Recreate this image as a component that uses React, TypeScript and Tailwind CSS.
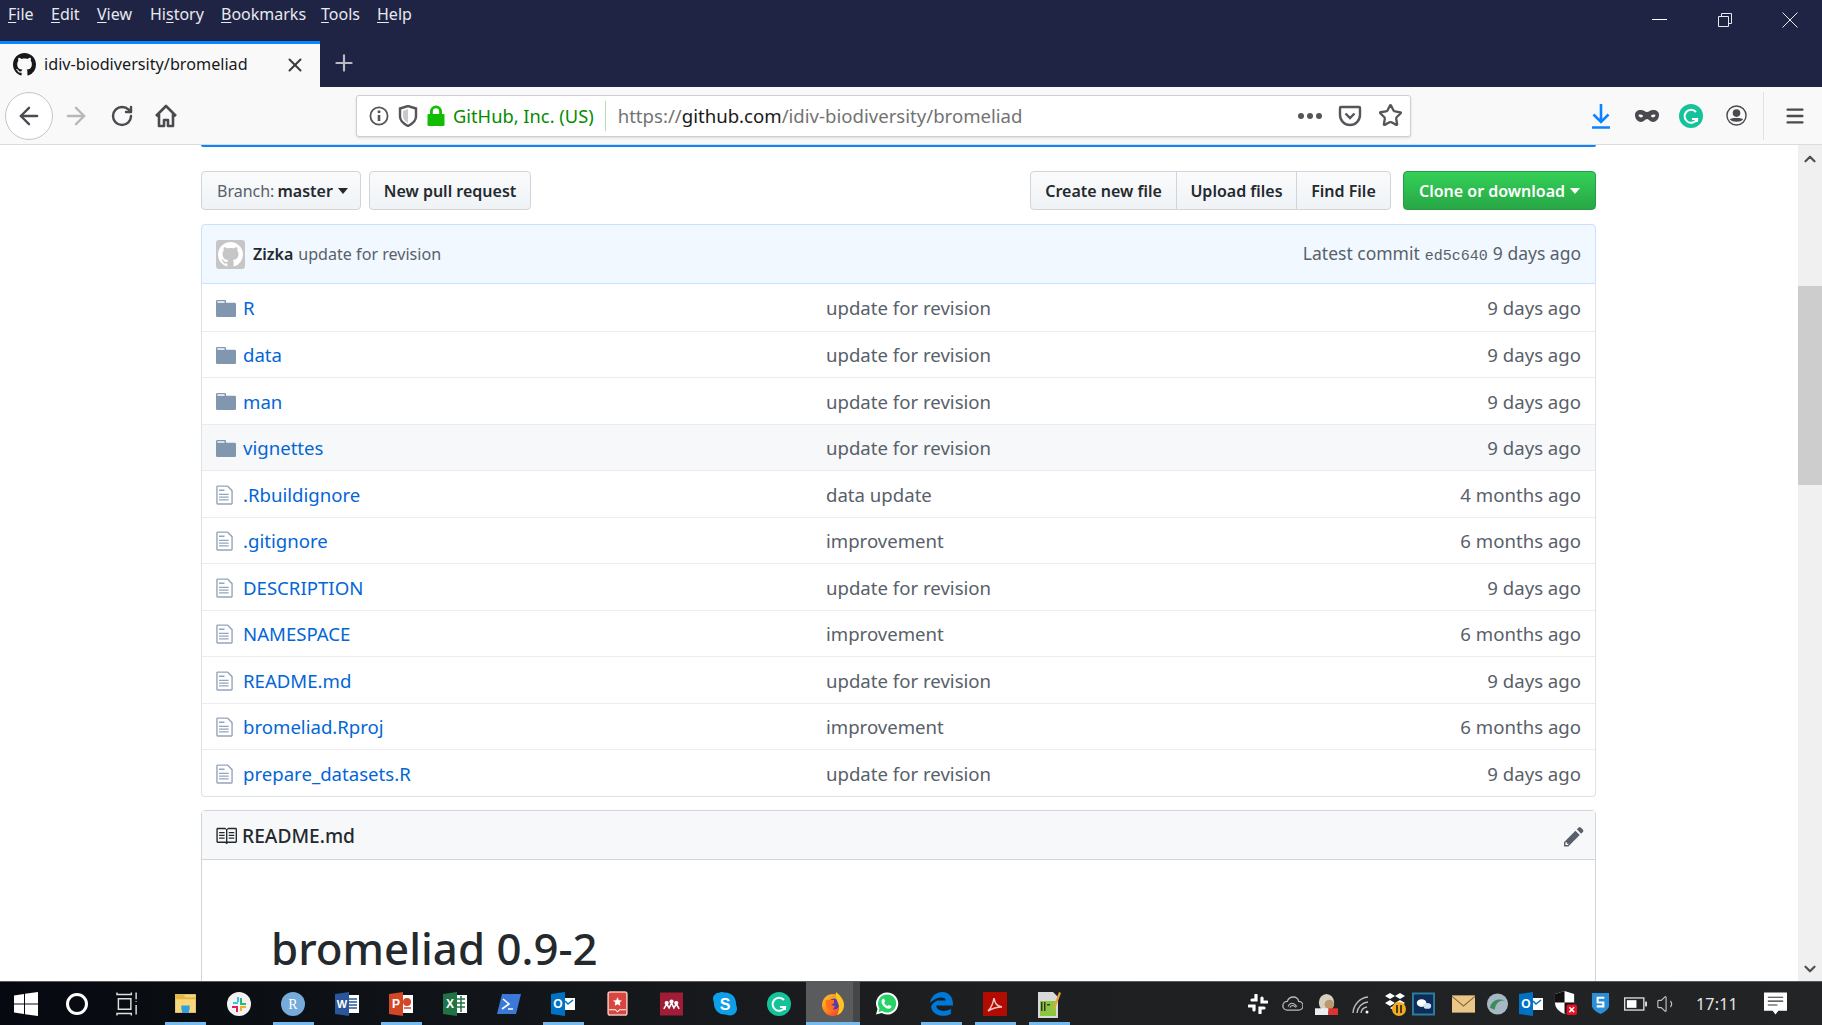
import React from 'react';
import { ArrowLeft, ArrowRight, RotateCw, Star, Plus, X, Menu, ChevronUp, ChevronDown, Volume1 } from 'lucide-react';

const GITHUB = 'M8 0C3.58 0 0 3.58 0 8c0 3.54 2.29 6.53 5.47 7.59.4.07.55-.17.55-.38 0-.19-.01-.82-.01-1.49-2.01.37-2.53-.49-2.69-.94-.09-.23-.48-.94-.82-1.13-.28-.15-.68-.52-.01-.53.63-.01 1.08.58 1.23.82.72 1.21 1.87.87 2.33.66.07-.52.28-.87.51-1.07-1.78-.2-3.64-.89-3.64-3.95 0-.87.31-1.59.82-2.15-.08-.2-.36-1.02.08-2.12 0 0 .67-.21 2.2.82.64-.18 1.32-.27 2-.27.68 0 1.36.09 2 .27 1.53-1.04 2.2-.82 2.2-.82.44 1.1.16 1.92.08 2.12.51.56.82 1.27.82 2.15 0 3.07-1.87 3.75-3.65 3.95.29.25.54.73.54 1.48 0 1.07-.01 1.93-.01 2.2 0 .21.15.46.55.38A8.013 8.013 0 0016 8c0-4.42-3.58-8-8-8z';

const rows = [
  { name: 'R', dir: true, msg: 'update for revision', age: '9 days ago' },
  { name: 'data', dir: true, msg: 'update for revision', age: '9 days ago' },
  { name: 'man', dir: true, msg: 'update for revision', age: '9 days ago' },
  { name: 'vignettes', dir: true, msg: 'update for revision', age: '9 days ago', hover: true },
  { name: '.Rbuildignore', dir: false, msg: 'data update', age: '4 months ago' },
  { name: '.gitignore', dir: false, msg: 'improvement', age: '6 months ago' },
  { name: 'DESCRIPTION', dir: false, msg: 'update for revision', age: '9 days ago' },
  { name: 'NAMESPACE', dir: false, msg: 'improvement', age: '6 months ago' },
  { name: 'README.md', dir: false, msg: 'update for revision', age: '9 days ago' },
  { name: 'bromeliad.Rproj', dir: false, msg: 'improvement', age: '6 months ago' },
  { name: 'prepare_datasets.R', dir: false, msg: 'update for revision', age: '9 days ago' },
];

const menus = [
  { pre: '', u: 'F', post: 'ile', w: 'w-[43px]' },
  { pre: '', u: 'E', post: 'dit', w: 'w-[46px]' },
  { pre: '', u: 'V', post: 'iew', w: 'w-[53px]' },
  { pre: 'Hi', u: 's', post: 'tory', w: 'w-[71px]' },
  { pre: '', u: 'B', post: 'ookmarks', w: 'w-[100px]' },
  { pre: '', u: 'T', post: 'ools', w: 'w-[56px]' },
  { pre: '', u: 'H', post: 'elp', w: 'w-[40px]' },
];

const FolderIcon = () => (
  <svg viewBox="0 0 14 16" className="w-[20px] h-[23px] fill-[#8197b0]">
    <path d="M13 4H7V3c0-.66-.31-1-1-1H1c-.55 0-1 .45-1 1v10c0 .55.45 1 1 1h12c.55 0 1-.45 1-1V5c0-.55-.45-1-1-1zM6 4H1V3h5v1z" />
  </svg>
);

const FileIcon = () => (
  <svg viewBox="0 0 12 16" className="w-[17px] h-[22px] fill-[#93a5bb]">
    <path d="M6 5H2V4h4v1zM2 8h7V7H2v1zm0 2h7V9H2v1zm0 2h7v-1H2v1zm10-7.5V14c0 .55-.45 1-1 1H1c-.55 0-1-.45-1-1V2c0-.55.45-1 1-1h7.5L12 4.5zM11 5L8 2H1v12h10V5z" />
  </svg>
);

const Caret = ({ className }: { className: string }) => (
  <span className={`inline-block w-0 h-0 border-x-[5px] border-x-transparent border-t-[6px] ${className}`} />
);

// taskbar slot, with the little "running" line under it
const Slot = ({ on, active, children }: { on?: boolean; active?: boolean; children: React.ReactNode }) => (
  <div className={`relative w-[54px] h-full flex items-center justify-center ${active ? 'bg-[#5a5b5c]' : ''}`}>
    {children}
    {active && <span className="absolute top-0 right-0 bottom-0 w-[7px] bg-[#454647]" />}
    {on && <span className={`absolute bottom-0 h-[3px] bg-[#76b9ed] ${active ? 'left-0 w-full' : 'left-[7px] w-[41px]'}`} />}
  </div>
);

const OutlookGlyph = () => (
  <svg viewBox="0 0 24 24" className="w-[24px] h-[26px]"><path d="M11 6h13v12H11z" fill="#fff" /><path d="M14 9l3 3 5-4" stroke="#0072c6" strokeWidth="1.500" fill="none" /><path d="M0 2l14-2v24L0 22z" fill="#0072c6" /><text x="7" y="16" textAnchor="middle" fontSize="12" fontWeight="700" fill="#fff" fontFamily="Liberation Sans, sans-serif">O</text></svg>
);

const GrammarlyGlyph = () => (
  <svg viewBox="0 0 24 24" className="w-[24px] h-[24px]"><circle cx="12" cy="12" r="12" fill="#15c39a" /><path d="M17 8a6.500 6.500 0 1 0 1 7h-5" stroke="#fff" strokeWidth="2" fill="none" /><path d="M18 15v3" stroke="#fff" strokeWidth="2" /></svg>
);

const TaskIcons = () => (
  <div className="flex h-full items-center">
    <Slot on>
      <svg viewBox="0 0 24 24" className="w-[25px] h-[25px]"><path d="M2 3h20v18H2z" fill="#f6d87a" /><path d="M2 3h8l2 3h10v2H2z" fill="#e7b64b" /><path d="M8 14h8v3l-1 4H9l-1-4z" fill="#2f9fe0" /></svg>
    </Slot>
    <Slot>
      <svg viewBox="0 0 24 24" className="w-[24px] h-[24px]"><circle cx="12" cy="12" r="12" fill="#f3f3f3" /><rect x="6" y="10" width="5" height="2" fill="#36c5f0" /><rect x="10" y="5" width="2" height="5" fill="#36c5f0" /><rect x="13" y="6" width="2" height="6" fill="#2eb67d" /><rect x="13" y="11" width="6" height="2" fill="#2eb67d" /><rect x="5" y="14" width="6" height="2" fill="#e01e5a" /><rect x="9" y="14" width="2" height="6" fill="#e01e5a" /><rect x="13" y="14" width="2" height="5" fill="#ecb22e" /><rect x="13" y="14" width="6" height="2" fill="#ecb22e" /></svg>
    </Slot>
    <Slot on>
      <svg viewBox="0 0 24 24" className="w-[24px] h-[24px]"><circle cx="12" cy="12" r="12" fill="#75aadb" /><text x="12" y="17" textAnchor="middle" fontSize="14" fill="#fff" fontFamily="Liberation Serif, serif">R</text></svg>
    </Slot>
    <Slot>
      <svg viewBox="0 0 24 24" className="w-[24px] h-[26px]"><path d="M9 3h15v18H9z" fill="#fff" /><path d="M14 7h8M14 10h8M14 13h8M14 16h8" stroke="#2b579a" strokeWidth="1.500" /><path d="M0 2l14-2v24L0 22z" fill="#2b579a" /><text x="7" y="16" textAnchor="middle" fontSize="11" fontWeight="700" fill="#fff" fontFamily="Liberation Sans, sans-serif">W</text></svg>
    </Slot>
    <Slot on>
      <svg viewBox="0 0 24 24" className="w-[24px] h-[26px]"><path d="M9 3h15v18H9z" fill="#fff" /><circle cx="18" cy="10" r="4" fill="#d24726" /><path d="M15 16h7" stroke="#d24726" strokeWidth="1.500" /><path d="M0 2l14-2v24L0 22z" fill="#d24726" /><text x="7" y="16" textAnchor="middle" fontSize="12" fontWeight="700" fill="#fff" fontFamily="Liberation Sans, sans-serif">P</text></svg>
    </Slot>
    <Slot>
      <svg viewBox="0 0 24 24" className="w-[24px] h-[26px]"><path d="M9 3h15v18H9z" fill="#fff" /><path d="M14 7h8M14 11h8M14 15h8M18 4v16" stroke="#217346" strokeWidth="1.500" /><path d="M0 2l14-2v24L0 22z" fill="#217346" /><text x="7" y="16" textAnchor="middle" fontSize="12" fontWeight="700" fill="#fff" fontFamily="Liberation Sans, sans-serif">X</text></svg>
    </Slot>
    <Slot>
      <svg viewBox="0 0 24 20" className="w-[24px] h-[20px]"><path d="M5 0h19l-5 20H0z" fill="#3b78d8" /><path d="M6 5l6 5-7 5M11 15h5" stroke="#fff" strokeWidth="1.600" fill="none" /></svg>
    </Slot>
    <Slot on><OutlookGlyph /></Slot>
    <Slot>
      <svg viewBox="0 0 20 24" className="w-[21px] h-[25px]"><rect x="1" y="1" width="18" height="22" rx="2" fill="#d9463e" stroke="#f3c1bd" strokeWidth="1.500" /><path d="M10 6l1.300 2.800 3 .3-2.200 2 .6 3-2.700-1.500-2.700 1.500.6-3-2.200-2 3-.3z" fill="#fff" /><path d="M2 18h6l2 2 2-2h6" stroke="#fff" fill="none" /></svg>
    </Slot>
    <Slot>
      <svg viewBox="0 0 24 24" className="w-[23px] h-[26px]"><rect width="24" height="24" fill="#a01c37" /><circle cx="7" cy="11" r="2.200" fill="#fff" /><circle cx="12" cy="9.500" r="2.200" fill="#fff" /><circle cx="17" cy="11" r="2.200" fill="#fff" /><path d="M4 17l3-5 2.500 4 2.500-5 2.500 5 2.500-4 3 5" stroke="#fff" strokeWidth="1.600" fill="none" /></svg>
    </Slot>
    <Slot>
      <svg viewBox="0 0 24 24" className="w-[24px] h-[25px]"><path d="M7 1c2-1 3 0 5 0 7 0 11 5 11 11 0 2 1 3 1 5 0 4-3 7-7 7-2 0-3-1-5-1C5 23 1 18 1 12c0-2-1-3-1-5 0-3 3-6 7-6z" fill="#0f9ee8" /><text x="12" y="18" textAnchor="middle" fontSize="16" fontWeight="700" fill="#fff" fontFamily="Liberation Sans, sans-serif">S</text></svg>
    </Slot>
    <Slot><GrammarlyGlyph /></Slot>
    <Slot on active>
      <svg viewBox="0 0 24 24" className="w-[24px] h-[26px]"><defs><linearGradient id="ff" x1="0" y1="0" x2="1" y2="1"><stop offset="0" stopColor="#ffcb2e" /><stop offset="0.55" stopColor="#ff7a1a" /><stop offset="1" stopColor="#e5244a" /></linearGradient></defs><circle cx="12" cy="13" r="11" fill="url(#ff)" /><circle cx="13" cy="12" r="5.500" fill="#5a3bb0" /><path d="M15 0c4 3 8 8 8 13 0 5-3 9-7 10 2-4 3-8 1-12-1-3-3-6-2-11z" fill="#ffc41f" /><path d="M5 8h8v3l-3 2 4 1-3 5c-4-1-7-6-6-11z" fill="#ff6f1e" /></svg>
    </Slot>
    <Slot>
      <svg viewBox="0 0 24 24" className="w-[24px] h-[25px]"><path d="M12 1a11 11 0 0 0-9.500 16.500L1 23l5.700-1.500A11 11 0 1 0 12 1z" fill="#fff" /><path d="M12 3a9 9 0 0 0-7.600 13.800L3.500 20.500l3.700-1A9 9 0 1 0 12 3z" fill="#25d366" /><path d="M8.500 7c1 0 1.500 2.500 1.500 3s-1 1-.8 1.500c.7 1.500 2 2.500 3.300 3 .5 0 1-1 1.500-1 .5 0 2.500 1 2.500 1.500 0 1-1.500 2.500-3 2.200C10 17 6.500 13 6.500 10c0-1.500 1-3 2-3z" fill="#fff" /></svg>
    </Slot>
    <Slot on>
      <svg viewBox="0 0 24 24" className="w-[25px] h-[25px]"><path d="M1 11C2 5 7 1 13 1c6 0 10 5 10 11v2H7c0 5 8 7 14 3v5c-8 4-18 1-19-7 1-3 4-5 6-6h8c0-3-6-5-15 2z" fill="#0078d7" /></svg>
    </Slot>
    <Slot on>
      <svg viewBox="0 0 24 24" className="w-[24px] h-[24px]"><rect width="24" height="24" fill="#b30b00" /><path d="M5 19c2-2 5-7 6-13 1 6 3 8 8 9-5 0-9 1-14 4z" stroke="#f4c7c3" strokeWidth="1.500" fill="none" /></svg>
    </Slot>
    <Slot on>
      <svg viewBox="0 0 24 28" className="w-[24px] h-[28px]"><path d="M1 2h15l5 5v21H1z" fill="#d9d9d9" /><path d="M3 11h16v15H3z" fill="#8cc63f" /><path d="M4 12h1.500v9H4zM7 12h1.500v9H7zM10 14h3v1.500h-3z" fill="#333" /><path d="M16 18l6-16 2 1-6 16-2 1z" fill="#e8a33d" /></svg>
    </Slot>
  </div>
);

const TrayIcons = () => (
  <div className="flex items-center h-full">
    <div className="w-[34px] flex justify-center"><svg viewBox="0 0 20 20" className="w-[20px] h-[20px]"><path d="M8 1v5H4M12 19v-5h4M1 12h5v4M19 8h-5V4" stroke="#fff" strokeWidth="3.200" fill="none" strokeLinecap="round" /></svg></div>
    <div className="w-[34px] flex justify-center"><svg viewBox="0 0 24 18" className="w-[21px] h-[16px]"><path d="M6 16a5 5 0 0 1 0-10c1-3 4-5 7-5s6 2 6 5a5 5 0 0 1 0 10z" stroke="#bbb" strokeWidth="1.500" fill="none" /><path d="M7 12c2-5 6-5 10 0M9 13c2-3 4-3 7 0" stroke="#bbb" strokeWidth="1.200" fill="none" /></svg></div>
    <div className="w-[34px] flex justify-center"><svg viewBox="0 0 24 26" className="w-[23px] h-[25px]"><ellipse cx="12" cy="12" rx="8" ry="9" fill="#d8cfc0" /><circle cx="15" cy="14" r="5" fill="#b99b6b" /><rect y="18" width="14" height="7" fill="#eee" /><rect x="14" y="18" width="10" height="7" fill="#d33" /></svg></div>
    <div className="ml-[1px] w-[34px] flex justify-center"><svg viewBox="0 0 20 20" className="w-[20px] h-[20px]"><path d="M2 19A17 17 0 0 1 17 3M6 19A12 12 0 0 1 17 8M10 19a7 7 0 0 1 6-6" stroke="#bbb" strokeWidth="1.400" fill="none" /><circle cx="16" cy="18" r="1.500" fill="#fff" /></svg></div>
    <div className="w-[34px] flex justify-center"><svg viewBox="0 0 24 24" className="w-[24px] h-[24px]"><path d="M7 1l5 3-5 3-5-3zM17 1l5 3-5 3-5-3zM7 8l5 3-5 3-5-3zM17 8l5 3-5 3-5-3zM7 16l5-3 5 3-5 3z" fill="#fff" /><circle cx="16" cy="17" r="7" fill="#f4a91e" /><path d="M14 13v8M18 13v8" stroke="#222" strokeWidth="1.600" /></svg></div>
    <div className="-ml-[6px] w-[34px] flex justify-center"><svg viewBox="0 0 24 24" className="w-[23px] h-[24px]"><rect x="1" y="1" width="22" height="22" fill="#0d2c5c" stroke="#2a7f9e" strokeWidth="2" /><ellipse cx="10" cy="11" rx="5" ry="4" fill="#fff" /><ellipse cx="16" cy="14" rx="4" ry="3" fill="#cfe2f3" /></svg></div>
    <div className="ml-[6px] w-[34px] flex justify-center"><svg viewBox="0 0 24 18" className="w-[23px] h-[18px]"><rect width="24" height="18" fill="#eac688" /><path d="M0 1l12 10L24 1" stroke="#8a6a35" strokeWidth="1.200" fill="none" /></svg></div>
    <div className="w-[34px] flex justify-center"><svg viewBox="0 0 24 24" className="w-[23px] h-[24px]"><circle cx="12" cy="12" r="11" fill="#a8b7c4" /><path d="M4 16c2-8 8-10 16-8-6 0-10 3-11 10z" fill="#3b8e5a" /></svg></div>
    <div className="w-[34px] flex justify-center"><OutlookGlyph /></div>
    <div className="w-[34px] flex justify-center"><svg viewBox="0 0 24 26" className="w-[23px] h-[25px]"><path d="M11 0l10 3v9c0 6-5 10-10 12C6 22 1 18 1 12V3z" fill="#fff" /><path d="M11 0v12H1V3zM11 12h10c0 6-5 10-10 12z" fill="#111" /><rect x="13" y="14" width="11" height="11" rx="2" fill="#e81123" /><path d="M16 17l5 5M21 17l-5 5" stroke="#fff" strokeWidth="1.500" /></svg></div>
    <div className="ml-[1px] w-[34px] flex justify-center"><svg viewBox="0 0 20 24" className="w-[19px] h-[23px]"><path d="M1 1h18v13c0 4-5 7-9 9-4-2-9-5-9-9z" fill="#2a8fd8" /><path d="M14 6H7v5h6v4H6" stroke="#fff" strokeWidth="2.200" fill="none" /></svg></div>
    <div className="ml-[1px] w-[34px] flex justify-center"><svg viewBox="0 0 24 14" className="w-[23px] h-[14px]"><rect x=".7" y=".7" width="20" height="12.600" stroke="#ddd" strokeWidth="1.400" fill="none" /><rect x="3" y="3" width="10" height="8" fill="#fff" /><rect x="22" y="4.500" width="2" height="5" fill="#ddd" /></svg></div>
    <div className="-ml-[2px] w-[34px] flex justify-center"><Volume1 className="w-[22px] h-[22px] text-[#c8c8c8]" strokeWidth={1.200} /></div>
    <span className="ml-[12px] w-[42px] text-[16px] text-[#e6e6e6] tracking-[0.200px] whitespace-nowrap">17:11</span>
    <div className="ml-[25px] w-[24px] flex justify-center">
      <svg viewBox="0 0 24 24" className="w-[23px] h-[24px]"><path d="M0 0h24v19h-9l-3 4-3-4H0z" fill="#fff" /><path d="M4 5h16M4 9h16M4 13h10" stroke="#333" strokeWidth="1.200" /></svg>
    </div>
  </div>
);

const btn = 'border border-[#d1d5da] bg-gradient-to-b from-[#fafbfc] to-[#eff3f6] flex items-center justify-center whitespace-nowrap';

export default function App() {
  return (
    <div className="w-[1822px] h-[1025px] overflow-hidden flex flex-col bg-white font-['Noto_Sans',sans-serif] text-[#24292e]">
      {/* Title bar and tabs */}
      <div className="relative h-[87px] shrink-0 bg-[#1f2444] flex flex-col">
        <div className="flex h-[28px] pl-[8px] items-center text-[16px] text-[#e8e9ee] leading-none">
          {menus.map((m, i) => (
            <span key={i} className={`${m.w} whitespace-nowrap`}>
              {m.pre}<span className="underline underline-offset-2">{m.u}</span>{m.post}
            </span>
          ))}
        </div>
        <div className="absolute top-[19px] right-[155px] w-[15px] h-px bg-white" />
        <svg viewBox="0 0 16 16" className="absolute top-[12px] right-[89px] w-[16px] h-[16px] stroke-[#e8e9ee] fill-none">
          <path d="M1.500 4.500h10v10h-10zM4.500 4.500v-3h10v10h-3" />
        </svg>
        <svg viewBox="0 0 16 16" className="absolute top-[12px] right-[24px] w-[16px] h-[16px] stroke-[#e8e9ee] fill-none">
          <path d="M.5.5l15 15M15.500.5l-15 15" />
        </svg>
        <div className="flex mt-[13px] h-[46px] items-stretch">
          <div className="w-[320px] bg-[#f9f9fa] border-t-[3px] border-[#0a84ff] flex items-center pl-[13px] pb-[2px]">
            <svg viewBox="0 0 16 16" className="w-[23px] h-[23px] fill-[#18181a]"><path d={GITHUB} /></svg>
            <span className="ml-[8px] w-[240px] text-[16.200px] text-[#18181a] whitespace-nowrap">idiv-biodiversity/bromeliad</span>
            <X className="w-[22px] h-[22px] text-[#3c3c40]" strokeWidth={2.200} />
          </div>
          <div className="flex items-center pl-[11px] pb-[2px]">
            <Plus className="w-[26px] h-[26px] text-[#b9bac4]" strokeWidth={2} />
          </div>
        </div>
      </div>

      {/* Navigation toolbar */}
      <div className="h-[58px] shrink-0 bg-[#f9f9fa] border-b border-[#dcdcde] flex items-center">
        <div className="ml-[5px] w-[48px] h-[48px] rounded-full border border-[#c6c6c8] bg-white flex items-center justify-center">
          <ArrowLeft className="w-[28px] h-[28px] text-[#4a4a4f]" strokeWidth={2} />
        </div>
        <ArrowRight className="ml-[9px] w-[28px] h-[28px] text-[#b8b8ba]" strokeWidth={2} />
        <RotateCw className="ml-[20px] w-[24px] h-[24px] text-[#4a4a4f]" strokeWidth={2.400} />
        <svg viewBox="0 0 24 24" className="ml-[20px] w-[24px] h-[24px] fill-none stroke-[#4a4a4f]" strokeWidth="2.600" strokeLinejoin="round">
          <path d="M2 12L12 2l10 10M5 10v12h5v-6h4v6h5V10" />
        </svg>
        <div className="ml-[178px] w-[1055px] h-[42px] bg-white border border-[#cfcfd1] rounded-[3px] shadow-sm flex items-center pl-[12px] pr-[7px]">
          <svg viewBox="0 0 20 20" className="w-[20px] h-[20px] fill-none stroke-[#55555a]" strokeWidth="1.800">
            <circle cx="10" cy="10" r="8.600" />
            <path d="M10 9v6" strokeWidth="2.600" />
            <circle cx="10" cy="5.800" r="1.500" fill="#55555a" stroke="none" />
          </svg>
          <svg viewBox="0 0 20 22" className="ml-[9px] w-[20px] h-[22px]">
            <path d="M10 1l8 2.500v8c0 4.500-4 7.500-8 9.500-4-2-8-5-8-9.500v-8z" fill="#fff" stroke="#55555a" strokeWidth="2.400" />
            <path d="M10 4v14c-3-1.500-5-4-5-7V6z" fill="#c9c9cb" />
          </svg>
          <svg viewBox="0 0 18 22" className="ml-[9px] w-[18px] h-[22px] fill-[#12bc00]">
            <path d="M3 9V6.500a6 6 0 0 1 12 0V9h1.500a1 1 0 0 1 1 1v10a1 1 0 0 1-1 1h-15a1 1 0 0 1-1-1V10a1 1 0 0 1 1-1zm2.800 0h6.400V6.500a3.200 3.200 0 0 0-6.400 0z" />
          </svg>
          <span className="ml-[8px] text-[18.300px] text-[#058b00] whitespace-nowrap">GitHub, Inc. (US)</span>
          <div className="ml-[11px] w-px h-[30px] bg-[#b5dfb0]" />
          <div className="ml-[12px] flex-1 text-[18.600px] text-[#737373] whitespace-nowrap">
            https://<span className="text-[#18181a]">github.com</span>/idiv-biodiversity/bromeliad
          </div>
          <div className="flex gap-[3px] mr-[16px]">
            <span className="w-[6px] h-[6px] rounded-full bg-[#55555a]" />
            <span className="w-[6px] h-[6px] rounded-full bg-[#55555a]" />
            <span className="w-[6px] h-[6px] rounded-full bg-[#55555a]" />
          </div>
          <svg viewBox="0 0 24 24" className="w-[24px] h-[24px] mr-[16px] fill-none stroke-[#55555a]" strokeWidth="2.400">
            <path d="M3 3h18a1 1 0 0 1 1 1v7c0 5.500-4.500 10-10 10S2 16.500 2 11V4a1 1 0 0 1 1-1z" />
            <path d="M7.500 9.500l4.500 4.500 4.500-4.500" />
          </svg>
          <Star className="w-[25px] h-[25px] text-[#55555a]" strokeWidth={2.200} />
        </div>
        <svg viewBox="0 0 20 26" className="ml-[180px] w-[20px] h-[26px] fill-none stroke-[#0a84ff]" strokeWidth="2.600">
          <path d="M10 1v18M2.500 11.500L10 19l7.500-7.500M1 24.500h18" />
        </svg>
        <svg viewBox="0 0 24 12" className="ml-[24px] w-[24px] h-[12px] fill-[#4a4a4f]">
          <path d="M6 0c3 0 4 2 6 2s3-2 6-2c4 0 6 2 6 5 0 4-3 7-6 7-3 0-4-3-6-3s-3 3-6 3c-3 0-6-3-6-7 0-3 2-5 6-5zm-.500 4.500c-1.500 0-2 .500-2 1s1.500 2 2.500 2 2-.800 2-1.500-1-1.500-2.500-1.500zm13 0C17 4.500 16 5.300 16 6s1 1.500 2 1.500 2.500-1.500 2.500-2-.500-1-2-1z" />
        </svg>
        <div className="ml-[20px]"><GrammarlyGlyph /></div>
        <svg viewBox="0 0 22 22" className="ml-[23px] w-[21px] h-[21px]">
          <circle cx="11" cy="11" r="10" fill="none" stroke="#4a4a4f" strokeWidth="1.500" />
          <circle cx="11" cy="8.500" r="4" fill="#4a4a4f" />
          <path d="M4 15c2-2 12-2 14 0-2 3.500-12 3.500-14 0z" fill="#4a4a4f" />
        </svg>
        <div className="ml-[16px] w-px h-[48px] bg-[#e1e1e2]" />
        <Menu className="ml-[20px] w-[22px] h-[22px] text-[#4a4a4f]" strokeWidth={2.600} />
      </div>

      {/* Page and its scrollbar */}
      <div className="flex-1 min-h-0 flex">
        <div className="flex-1 min-w-0 overflow-hidden">
          <div className="ml-[201px] w-[1395px]">
            <div className="h-[2px] bg-[#0a84ff] rounded-b-[3px]" />

            <div className="mt-[24px] h-[39px] flex items-stretch text-[16px] font-semibold">
              <div className={`${btn} w-[160px] rounded-[4px] !justify-start pl-[15px]`}>
                <span className="font-normal text-[#586069]">Branch:</span>
                <span className="ml-[3px]">master</span>
                <Caret className="ml-[5px] border-t-[#24292e]" />
              </div>
              <div className={`${btn} ml-[8px] w-[162px] rounded-[4px]`}>New pull request</div>
              <div className="ml-auto flex">
                <div className={`${btn} w-[147px] rounded-l-[4px]`}>Create new file</div>
                <div className={`${btn} -ml-px w-[121px]`}>Upload files</div>
                <div className={`${btn} -ml-px w-[95px] rounded-r-[4px]`}>Find File</div>
              </div>
              <div className="ml-[12px] w-[193px] rounded-[4px] border border-[#2a9a44] bg-gradient-to-b from-[#34d058] to-[#28a745] text-white flex items-center justify-center whitespace-nowrap">
                Clone or download
                <Caret className="ml-[5px] border-t-white" />
              </div>
            </div>

            <div className="mt-[14px] h-[60px] bg-[#f1f8ff] border border-[#c8e1ff] rounded-t-[4px] flex items-center pl-[14px] pr-[14px] text-[#586069]">
              <div className="w-[29px] h-[29px] rounded-[3px] bg-[#c6c6c6] flex items-center justify-center">
                <svg viewBox="0 0 16 16" className="w-[25px] h-[25px] fill-white"><path d={GITHUB} /></svg>
              </div>
              <span className="ml-[8px] text-[16px] font-semibold text-[#24292e]">Zizka</span>
              <span className="ml-[5px] text-[16.100px]">update for revision</span>
              <div className="ml-auto flex items-baseline text-[17.500px]">
                <span>Latest commit</span>
                <span className="ml-[5px] font-['Liberation_Mono',monospace] text-[15px]">ed5c640</span>
                <span className="ml-[5px]">9 days ago</span>
              </div>
            </div>

            <div className="border-x border-b border-[#dfe2e5] rounded-b-[4px] text-[18.600px]">
              {rows.map((r, i) => (
                <div key={r.name} className={`h-[46.500px] flex items-center pt-[2px] pl-[14px] pr-[14px] ${i > 0 ? 'border-t border-[#eaecef]' : ''} ${r.hover ? 'bg-[#f6f8fa]' : ''}`}>
                  <div className="w-[27px] flex">{r.dir ? <FolderIcon /> : <FileIcon />}</div>
                  <span className="w-[583px] text-[#0366d6] whitespace-nowrap">{r.name}</span>
                  <span className="text-[#586069] whitespace-nowrap">{r.msg}</span>
                  <span className="ml-auto text-[#586069] whitespace-nowrap">{r.age}</span>
                </div>
              ))}
            </div>

            <div className="mt-[13.500px] border border-[#d1d5da] rounded-t-[4px]">
              <div className="h-[49px] pt-[2px] bg-[#f6f8fa] border-b border-[#d1d5da] flex items-center pl-[13px] pr-[11px]">
                <svg viewBox="0 0 16 16" className="w-[22px] h-[22px] fill-[#24292e]">
                  <path d="M3 5h4v1H3V5zm0 3h4V7H3v1zm0 2h4V9H3v1zm11-5h-4v1h4V5zm0 2h-4v1h4V7zm0 2h-4v1h4V9zm2-6v9c0 .55-.45 1-1 1H9.500l-1 1-1-1H2c-.55 0-1-.45-1-1V3c0-.55.45-1 1-1h5.500l1 1 1-1H15c.55 0 1 .45 1 1zm-8 .5L7.500 3H2v9h6V3.500zm7-.5H9.500l-.5.500V12h6V3z" />
                </svg>
                <span className="ml-[5px] text-[19.200px] font-medium">README.md</span>
                <svg viewBox="0 0 14 16" className="ml-auto w-[20px] h-[23px] fill-[#586069]">
                  <path d="M0 12v3h3l8-8-3-3-8 8zm3 2H1v-2h1v1h1v1zm10.300-9.300L12 6 9 3l1.300-1.300a.996.996 0 011.410 0l1.590 1.590c.390.390.390 1.020 0 1.410z" />
                </svg>
              </div>
              <div className="h-[122px] pt-[58px] pl-[69px] overflow-hidden">
                <h1 className="text-[43.800px] leading-[60px] font-medium whitespace-nowrap">bromeliad 0.9-2</h1>
              </div>
            </div>
          </div>
        </div>

        <div className="w-[24px] shrink-0 bg-[#f0f0f0] flex flex-col items-center">
          <div className="h-[27px] flex items-center justify-center">
            <ChevronUp className="w-[18px] h-[18px] text-[#505050]" strokeWidth={3} />
          </div>
          <div className="mt-[114px] w-full h-[199px] bg-[#cdcdcd]" />
          <div className="mt-auto h-[25px] flex items-center justify-center">
            <ChevronDown className="w-[18px] h-[18px] text-[#505050]" strokeWidth={3} />
          </div>
        </div>
      </div>

      {/* Windows taskbar */}
      <div className="h-[44px] shrink-0 border-t border-[#5a5b5c] bg-gradient-to-r from-[#06090f] via-[#1c1e20] to-[#232425] flex items-center">
        <svg viewBox="0 0 24 24" className="ml-[14px] w-[24px] h-[26px] fill-white">
          <path d="M0 3.500L10 2v9.500H0zM11 1.800L24 0v11.500H11zM0 12.500h10V22L0 20.500zM11 12.500h13V24l-13-1.800z" />
        </svg>
        <div className="ml-[28px] w-[22px] h-[22px] rounded-full border-[3px] border-white" />
        <svg viewBox="0 0 24 26" className="ml-[28px] w-[23px] h-[26px] fill-none stroke-[#e0e0e0]" strokeWidth="1.500">
          <path d="M1 1v2h15V1M2.500 7.500h13v11h-13zM1 25v-2h15v2M21 1v7M21 10v1M21 14v10" />
        </svg>
        <div className="ml-[19px] h-full"><TaskIcons /></div>
        <div className="ml-auto h-full pr-[35px]"><TrayIcons /></div>
      </div>
    </div>
  );
}
